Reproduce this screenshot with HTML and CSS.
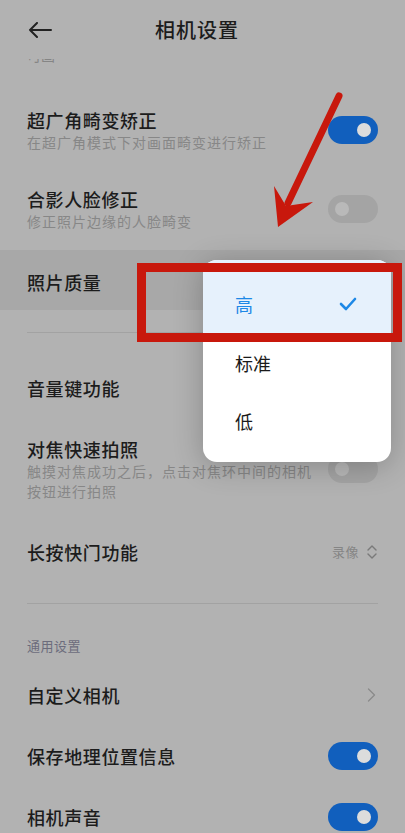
FILE: index.html
```html
<!DOCTYPE html>
<html>
<head>
<title>相机设置</title>
<meta name="viewport" content="width=device-width, initial-scale=1.0">
<link rel="stylesheet" href="styles.css">
</head>
<body>
<div class="screen">

<header class="topbar">
 <svg class="back" width="24" height="16" viewBox="0 0 24 16"><path d="M23 8H2M9 1L2 8l7 7" fill="none" stroke="#222" stroke-width="2" stroke-linecap="round" stroke-linejoin="round"/></svg>
 <h1>相机设置</h1>
</header>

<div class="cut"><span>可画</span></div>

<div class="row two">
 <div class="text"><div class="title">超广角畸变矫正</div><div class="sub">在超广角模式下对画面畸变进行矫正</div></div>
 <span class="switch on"></span>
</div>
<div class="row two">
 <div class="text"><div class="title">合影人脸修正</div><div class="sub">修正照片边缘的人脸畸变</div></div>
 <span class="switch"></span>
</div>
<div class="row pressed">
 <div class="text"><div class="title">照片质量</div></div>
</div>

<hr class="divider">

<div class="row">
 <div class="text"><div class="title">音量键功能</div></div>
</div>
<div class="row three">
 <div class="text"><div class="title">对焦快速拍照</div><div class="sub">触摸对焦成功之后，点击对焦环中间的相机按钮进行拍照</div></div>
 <span class="switch"></span>
</div>
<div class="row">
 <div class="text"><div class="title">长按快门功能</div></div>
 <span class="value">录像
  <svg width="12" height="16" viewBox="0 0 12 16"><path d="M2 6l4-4 4 4M2 10l4 4 4-4" fill="none" stroke="#7a7a7a" stroke-width="1.4" stroke-linecap="round" stroke-linejoin="round"/></svg>
 </span>
</div>

<hr class="divider low">

<div class="section">通用设置</div>

<div class="row">
 <div class="text"><div class="title">自定义相机</div></div>
 <svg class="more" width="9" height="14" viewBox="0 0 9 14"><path d="M1.5 1l6 6-6 6" fill="none" stroke="#8a8a8a" stroke-width="1.3" stroke-linecap="round" stroke-linejoin="round"/></svg>
</div>
<div class="row">
 <div class="text"><div class="title">保存地理位置信息</div></div>
 <span class="switch on"></span>
</div>
<div class="row">
 <div class="text"><div class="title">相机声音</div></div>
 <span class="switch on"></span>
</div>

<div class="popup">
 <div class="opt first sel">高
  <svg width="18" height="14" viewBox="0 0 18 14"><path d="M2 7l5 5L16 2" fill="none" stroke="#1d88e6" stroke-width="2.6" stroke-linecap="round" stroke-linejoin="round"/></svg>
 </div>
 <div class="opt">标准</div>
 <div class="opt">低</div>
</div>

<svg class="marks" width="405" height="833" viewBox="0 0 405 833">
 <rect x="141.5" y="267.5" width="256" height="70" fill="none" stroke="#c8180c" stroke-width="9"/>
 <path d="M339 96L288 203" stroke="#c8180c" stroke-width="7" stroke-linecap="round"/>
 <polygon points="278,227 274,186 286,206 313,202" fill="#c8180c"/>
</svg>

</div>
</body>
</html>
```

FILE: styles.css
```css
html, body {
 margin:0;
 padding:0;
 background:#b2b2b2;
}
.screen {
 position:relative;
 width:405px;
 height:833px;
 overflow:hidden;
 font-family:"Noto Sans CJK SC", "Noto Sans", sans-serif;
 color:#1c1c1c;
}
.topbar {
 display:flex;
 align-items:center;
 height:59px;
 padding:0 0 0 28px;
}
.topbar .back {display:block;}
.topbar h1 {
 margin:0 0 0 103px;
 font-size:20px;
 font-weight:500;
 letter-spacing:1px;
 line-height:26px;
}
.cut {
 display:flex;
 flex-direction:column;
 justify-content:flex-end;
 height:33px;
 padding:0 27px 27px;
 box-sizing:border-box;
 overflow:hidden;
 font-size:14px;
 line-height:20px;
 color:#858585;
}
.row {
 display:flex;
 align-items:center;
 gap:14px;
 height:61px;
 padding:0 27px;
 box-sizing:border-box;
}
.row.two {
 height:79px;
 padding:16px 27px 19px;
}
.row.three {
 height:103px;
 padding:19px 27px 20px;
}
.row.pressed {
 height:60px;
 padding-top:3px;
 background:#a8a8a8;
}
.text {flex:1; min-width:0;}
.title {
 font-size:18px;
 font-weight:500;
 letter-spacing:0.6px;
 line-height:24px;
}
.sub {
 font-size:14px;
 letter-spacing:1px;
 line-height:20px;
 color:#878787;
}
.switch {
 flex:none;
 position:relative;
 width:50px;
 height:28px;
 border-radius:14px;
 background:#a4a4a4;
}
.switch::after {
 content:"";
 position:absolute;
 top:7px;
 left:7px;
 width:14px;
 height:14px;
 border-radius:50%;
 background:#b9b9b9;
}
.switch.on {background:#115fbd;}
.switch.on::after {left:29px; background:#dcdcdc;}
.value {
 display:flex;
 align-items:center;
 gap:7px;
 font-size:13px;
 letter-spacing:0.5px;
 color:#858585;
}
.value svg, .more {display:block; flex:none;}
.more {margin-right:2px;}
.divider {
 margin:22px 27px 24px;
 border:0;
 border-top:1px solid #a2a2a2;
}
.divider.low {margin:21px 27px 0;}
.section {
 padding:33px 27px 9px;
 font-size:13px;
 line-height:18px;
 letter-spacing:0.5px;
 color:#6c6c7c;
}
.popup {
 position:absolute;
 left:203px;
 top:260px;
 width:188px;
 padding-bottom:12px;
 border-radius:14px;
 background:#fff;
 overflow:hidden;
 box-shadow:0 4px 30px rgba(0,0,0,0.24);
}
.opt {
 display:flex;
 align-items:center;
 justify-content:space-between;
 height:58px;
 padding:0 34px 0 32px;
 font-size:18px;
 color:#1a1a1a;
}
.opt.first {height:74px; padding-top:14px; box-sizing:border-box;}
.opt.sel {background:#e6f1fc; color:#1d88e6;}
.marks {
 position:absolute;
 left:0;
 top:0;
 pointer-events:none;
}
```
